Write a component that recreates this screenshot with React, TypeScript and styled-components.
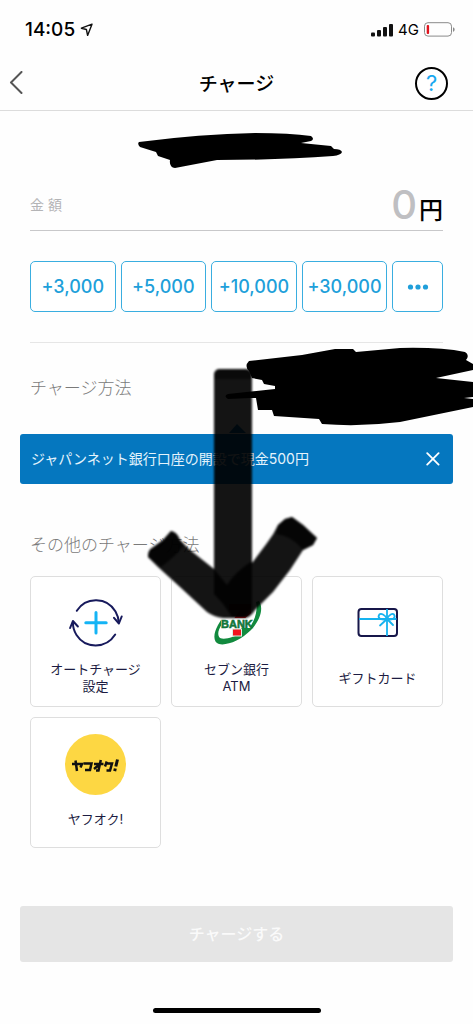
import React from 'react';
import styled, { createGlobalStyle } from 'styled-components';

const GlobalStyle = createGlobalStyle`
  *, *::before, *::after { box-sizing: border-box; }
  body {
    margin: 0;
    background: #fefefe;
    color: #000;
    font-family: Inter, "Noto Sans CJK JP", sans-serif;
  }
  button, input { font-family: inherit; }
  h1, h2 { margin: 0; }
`;

const Screen = styled.div`
  position: relative;
  overflow: hidden;
  min-height: 100vh;
  display: flex;
  flex-direction: column;
`;

const StatusBar = styled.div`
  display: flex;
  align-items: center;
  justify-content: space-between;
  height: 56px;
  padding: 3px 18px 0 25px;
`;

const StatusGroup = styled.div`
  display: flex;
  align-items: center;
  gap: 5px;
`;

const Clock = styled.span`
  font-size: 19px;
  line-height: 24px;
  font-weight: 500;
`;

const Network = styled.span`
  font-size: 15px;
  line-height: 20px;
`;

const Header = styled.header`
  display: grid;
  grid-template-columns: 1fr auto 1fr;
  align-items: center;
  height: 55px;
  padding: 0 25px 0 8px;
  border-bottom: 1px solid #dcdcdc;
`;

const BackButton = styled.button`
  display: flex;
  width: 32px;
  padding: 0;
  border: 0;
  background: none;
`;

const Title = styled.h1`
  padding: 3px 0 0 17px;
  font-size: 19px;
  line-height: 28px;
  font-weight: 500;
`;

const HelpButton = styled.button`
  justify-self: end;
  width: 33px;
  height: 33px;
  padding: 0;
  border: 2px solid #000;
  border-radius: 50%;
  background: #fff;
  color: #18a8f0;
  font-size: 22px;
  line-height: 28px;
`;

const Main = styled.main`
  display: flex;
  flex-direction: column;
  padding: 64px 20px 0;
`;

const Section = styled.section`
  padding: 0 10px;
`;

const AmountRow = styled.div`
  display: flex;
  align-items: center;
  height: 56px;
  padding-top: 5px;
  border-bottom: 1px solid #c8c8ca;
`;

const AmountLabel = styled.label`
  color: #b4b4b6;
  font-size: 14px;
  line-height: 20px;
`;

const AmountInput = styled.input`
  flex: 1;
  min-width: 0;
  height: 48px;
  padding: 0;
  border: 0;
  outline: 0;
  background: transparent;
  text-align: right;
  font-size: 40px;
  line-height: 48px;
  font-weight: 500;
  &::placeholder { color: #bfbfc2; opacity: 1; }
`;

const Yen = styled.span`
  padding: 11px 0 0 2px;
  font-size: 24px;
  line-height: 32px;
  font-weight: 500;
`;

const QuickRow = styled.div`
  display: grid;
  grid-template-columns: repeat(4, 86fr) 51fr;
  gap: 5px;
  padding: 30px 0;
  border-bottom: 1px solid #e6e6e6;
`;

const QuickButton = styled.button`
  display: flex;
  align-items: center;
  justify-content: center;
  height: 51px;
  padding: 0;
  border: 1px solid #3aaee0;
  border-radius: 5px;
  background: #fff;
  color: #209fda;
  font-size: 18px;
  line-height: 24px;
  font-weight: 500;
`;

const SectionTitle = styled.h2<{ $top: number; $bottom: number }>`
  padding: ${p => p.$top}px 0 ${p => p.$bottom}px;
  color: #7a7a7a;
  font-size: 17px;
  line-height: 24px;
  font-weight: 300;
`;

const Banner = styled.div`
  display: flex;
  align-items: center;
  justify-content: space-between;
  height: 50px;
  padding: 0 13px 0 11px;
  border-radius: 3px;
  background: #0577bf;
  color: #e4f3fc;
  font-size: 14px;
  line-height: 20px;
  font-weight: 400;
`;

const CloseButton = styled.button`
  display: flex;
  padding: 0;
  border: 0;
  background: none;
`;

const Grid = styled.div`
  display: grid;
  grid-template-columns: repeat(3, 1fr);
  gap: 10px;
`;

const Card = styled.button`
  display: flex;
  flex-direction: column;
  align-items: center;
  height: 131px;
  padding: 16px 0 4px;
  border: 1px solid #dedede;
  border-radius: 5px;
  background: #fff;
  color: #1c1c42;
`;

const CardIcon = styled.span`
  display: flex;
  height: 61px;
`;

const CardLabel = styled.span`
  display: flex;
  flex: 1;
  flex-direction: column;
  align-items: center;
  justify-content: center;
  font-size: 13px;
  line-height: 17px;
  font-weight: 400;
`;

const SubmitButton = styled.button`
  height: 56px;
  margin-top: 58px;
  border: 0;
  border-radius: 3px;
  background: #e5e5e5;
  color: #fafafa;
  font-size: 16px;
  line-height: 24px;
  font-weight: 500;
`;

const HomeIndicator = styled.div`
  width: 168px;
  height: 5px;
  margin: 46px auto 11px;
  border-radius: 3px;
  background: #000;
`;

const Markup = styled.svg`
  position: absolute;
  top: 0;
  left: 0;
  pointer-events: none;
`;

const LocationIcon = () => (
  <svg width="14" height="14" viewBox="0 0 14 14" fill="none" stroke="#111" strokeWidth="1.4" strokeLinejoin="round">
    <path d="M12 1.2 1.400 5.200 6.400 6.500 7.600 12.400Z" />
  </svg>
);

const SignalIcon = () => (
  <svg width="22" height="14" viewBox="0 0 22 14" fill="#111">
    <rect x="0" y="9.5" width="4" height="4" rx="1" />
    <rect x="6" y="7" width="4" height="6.5" rx="1" />
    <rect x="12" y="4" width="4" height="9.5" rx="1" />
    <rect x="18" y="1" width="4" height="12.5" rx="1" />
  </svg>
);

const BatteryIcon = () => (
  <svg width="31" height="15" viewBox="0 0 31 15" fill="none">
    <rect x="0.5" y="0.7" width="27" height="13.4" rx="3.5" stroke="#8a8a8a" />
    <rect x="2.7" y="3" width="2.4" height="9" rx="1" fill="#e0131d" />
    <path d="M29 5.2c2.2.8 2.2 3.8 0 4.6Z" fill="#8a8a8a" />
  </svg>
);

const BackIcon = () => (
  <svg width="16" height="24" viewBox="0 0 16 24" fill="none" stroke="#555" strokeWidth="2" strokeLinecap="round" strokeLinejoin="round">
    <path d="M13.5 1 3 11.500l10.500 10.500" />
  </svg>
);

const CloseIcon = () => (
  <svg width="14" height="14" viewBox="0 0 14 14" stroke="#fff" strokeWidth="1.8" strokeLinecap="round">
    <path d="m1.2 1.2 11.4 11.4M12.6 1.2 1.2 12.6" />
  </svg>
);

const DotsIcon = () => (
  <svg width="22" height="6" viewBox="0 0 22 6" fill="#209fda">
    <circle cx="3.5" cy="3" r="2.6" />
    <circle cx="11" cy="3" r="2.6" />
    <circle cx="18.5" cy="3" r="2.6" />
  </svg>
);

const AutoChargeIcon = () => (
  <svg width="56" height="61" viewBox="0 0 56 61" fill="none" strokeLinecap="round" strokeLinejoin="round">
    <g stroke="#171a5c" strokeWidth="2">
      <path d="M8.8 17.8C18 3.2 39 4 47.5 18.5 49.5 22 50.6 25.5 50.8 29.5" />
      <path d="m46 24.8 4.9 5.7 2.8-7" />
      <path d="M47.2 41.5C38 56 17.5 56 8.5 42 6 38 4.9 33.5 4.9 29.5" />
      <path d="m2.1 35 2.8-7 5 5.5" />
    </g>
    <path d="M28 19.500v20.500M17.800 29.800h20.400" stroke="#14b4f5" strokeWidth="3" />
  </svg>
);

const SevenBankIcon = () => (
  <svg width="56" height="61" viewBox="0 0 56 61">
    <path d="M20 11h22v9L34 27h-10l7-10H20Z" fill="#e51c23" />
    <path d="M50 8C55 15 51 28 42 37 32 47 18 53 10 51 4 49 4 41 9 32L12 27 13 31C9 37 8 42 11 45 16 47 25 44 32 40V35H40C46 28 49 17 47 9Z" fill="#128a3e" />
    <rect x="23.500" y="36" width="9" height="7" fill="#f0141e" stroke="#dceee2" strokeWidth="1" />
    <rect x="12" y="25" width="30" height="10" fill="#fff" />
    <text x="12" y="35" fill="#12763b" stroke="#12763b" strokeWidth="0.6" fontFamily="Liberation Sans" fontSize="11" fontWeight="700">BANK</text>
  </svg>
);

const GiftCardIcon = () => (
  <svg width="42" height="61" viewBox="0 0 42 61" fill="none" strokeWidth="1.8">
    <rect x="1.5" y="16" width="38.5" height="27" rx="3" stroke="#17174a" strokeWidth="2" />
    <g stroke="#16b3ef" strokeLinecap="round">
      <path d="M2 26h37.5M30 16v27" strokeLinecap="butt" />
      <path d="M30 26C28 21.500 24 20 22.300 21.500 20.500 24 22.500 28 30 26ZM30 26C32 21.500 35.500 20 37 21.500 38.800 24 36.500 28 30 26Z" />
      <path d="M30 26 23 32.500M30 26l6 6" />
    </g>
  </svg>
);

const AuctionIcon = () => (
  <svg width="61" height="61" viewBox="0 0 61 61">
    <circle cx="30.500" cy="30.500" r="30.500" fill="#fdd743" />
    <g fill="none" stroke="#111" strokeWidth="2.500" strokeLinejoin="miter">
      <path d="M7 30h10l-1.500 3.500M10.500 26.500l1.500 10.500" />
      <path d="M18.500 29.500h8l-1.500 6.500h-5" />
      <path d="M29 30h9.500M35.800 26l-2.300 10.500h-2.500M34.500 30.500l-5.500 4.500" />
      <path d="m41.800 27.500-1.800 5M41 29.500h6l-2 7h-3.500" />
      <path d="m52.500 25.500-1.700 7M50.300 34.500l-.6 2.600" strokeWidth="3" />
    </g>
  </svg>
);

const amounts = ['+3,000', '+5,000', '+10,000', '+30,000'];

const methods = [
  { lines: ['オートチャージ', '設定'], icon: <AutoChargeIcon /> },
  { lines: ['セブン銀行', 'ATM'], icon: <SevenBankIcon /> },
  { lines: ['ギフトカード'], icon: <GiftCardIcon /> },
  { lines: ['ヤフオク!'], icon: <AuctionIcon /> },
];

/* Hand-drawn marks laid over the page: two scribbles and a marker arrow. */
const Scribbles = () => (
  <Markup width="473" height="640" viewBox="0 0 473 640" aria-hidden="true">
    <defs>
      <filter id="soft" x="-10%" y="-10%" width="120%" height="120%">
        <feGaussianBlur stdDeviation="0.9" />
      </filter>
    </defs>
    <path d="m229 433 8-9 9 9Z" fill="#0577bf" />
    <g filter="url(#soft)">
      <path d="M214 374q1-5 6-5h25q6 0 7 5V563L267 543Q274 534 278 525L285 519 292 517 303 525 317 538 313 545 303 550 290 570 273 592 255 610Q251 617 245 618H223Q214 617 207 612L180 587 158 567 148 557Q148 550 152 548L163 540 171 531Q177 532 180 540L190 550 214 569Z" fill="#000" opacity="0.92" />
      <path d="M171 531Q177 532 180 540L184 545Q176 556 161 567L148 557Q148 550 152 548L163 540Z" fill="#000" opacity="0.75" />
      <path d="m278 525 7-6 7-2 11 8 14 13-4 7-10 5Q292 536 276 534Z" fill="#000" opacity="0.75" />
      <path d="M214 379V374q1-5 6-5h25q6 0 7 5V379Z" fill="#000" opacity="0.5" />
      <path d="M214 569 227 585Q235 572 252 561V608L246 617H232L223 604 214 594Z" fill="#000" opacity="0.85" />
    </g>
    <path d="M139 142Q200 134 255 133 290 133 311 136 315 139 311 141L301 143 331 146 334 149Q341 149 342 152 341 155 333 156 280 160 217 160L175 168Q169 167 170 160L158 156 156 152 140 147Q137 144 139 142Z" />
    <path d="M249 361 302 355 335 349H353L356 352 400 348Q440 347 465 352 470 355 466 360L473 364V370L436 378 473 382V397L464 398 473 399V407L400 422Q360 427 322 424L319 419 274 416 272 410H258L256 398 250 398 228 399Q223 396 228 394L275 389V386L264 384 262 380 252 378 249 371Q244 366 249 361Z" />
  </Markup>
);

export default function App() {
  return (
    <>
      <GlobalStyle />
      <Screen>
        <StatusBar>
          <StatusGroup>
            <Clock>14:05</Clock>
            <LocationIcon />
          </StatusGroup>
          <StatusGroup>
            <SignalIcon />
            <Network>4G</Network>
            <BatteryIcon />
          </StatusGroup>
        </StatusBar>
        <Header>
          <BackButton aria-label="戻る"><BackIcon /></BackButton>
          <Title>チャージ</Title>
          <HelpButton aria-label="ヘルプ">?</HelpButton>
        </Header>
        <Main>
          <Section>
            <AmountRow>
              <AmountLabel htmlFor="amount">金 額</AmountLabel>
              <AmountInput id="amount" inputMode="numeric" placeholder="0" />
              <Yen>円</Yen>
            </AmountRow>
            <QuickRow>
              {amounts.map(a => <QuickButton key={a}>{a}</QuickButton>)}
              <QuickButton aria-label="その他の金額"><DotsIcon /></QuickButton>
            </QuickRow>
            <SectionTitle $top={33} $bottom={34}>チャージ方法</SectionTitle>
          </Section>
          <Banner>
            <span>ジャパンネット銀行口座の開設で現金500円</span>
            <CloseButton aria-label="閉じる"><CloseIcon /></CloseButton>
          </Banner>
          <Section>
            <SectionTitle $top={49} $bottom={19}>その他のチャージ方法</SectionTitle>
            <Grid>
              {methods.map(m => (
                <Card key={m.lines[0]}>
                  <CardIcon>{m.icon}</CardIcon>
                  <CardLabel>
                    {m.lines.map(line => <span key={line}>{line}</span>)}
                  </CardLabel>
                </Card>
              ))}
            </Grid>
          </Section>
          <SubmitButton disabled>チャージする</SubmitButton>
        </Main>
        <HomeIndicator />
        <Scribbles />
      </Screen>
    </>
  );
}
